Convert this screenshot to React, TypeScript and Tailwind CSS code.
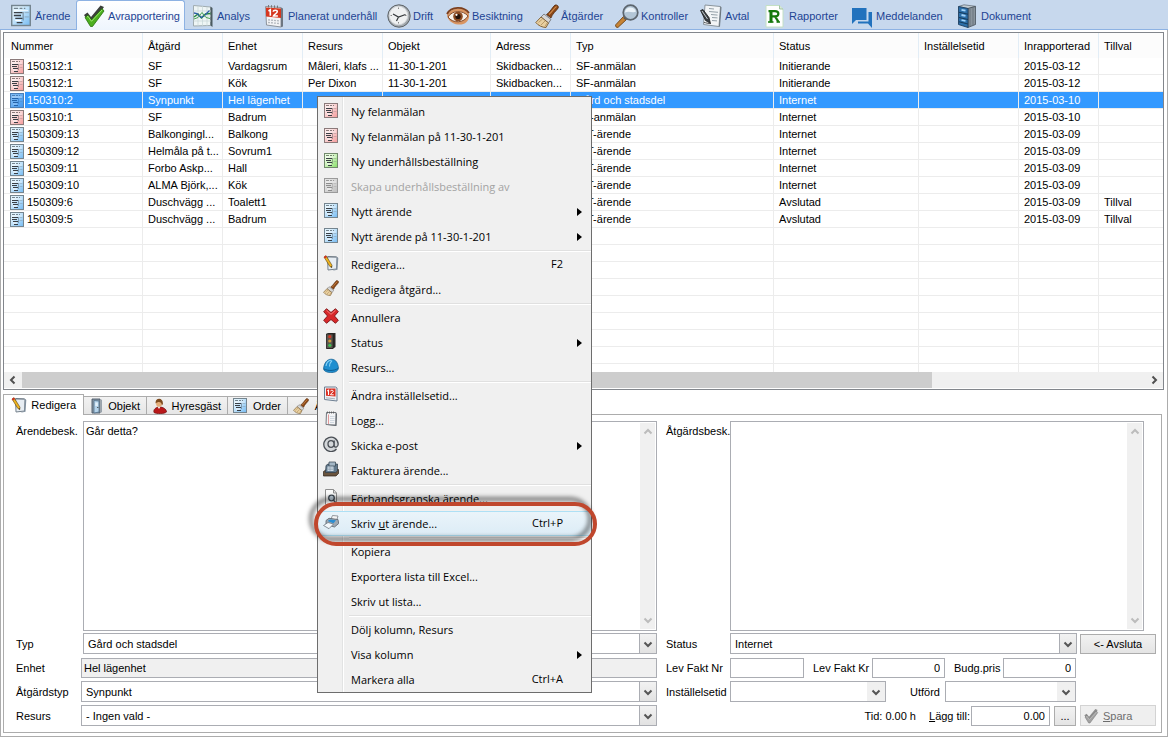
import { Fragment, useId, type ReactNode } from "react";

type IconProps = { className?: string };

const paperTones = {
  red: { light: "#fbe6e6", dark: "#f49a9a", edge: "#8b7a7a" },
  blue: { light: "#dff2fd", dark: "#74baf2", edge: "#75858f" },
  green: { light: "#e8fade", dark: "#86de66", edge: "#728a6c" },
  gray: { light: "#e2e2e2", dark: "#bdbdbd", edge: "#9a9a9a" },
  picked: { light: "#78b8f4", dark: "#3d94ec", edge: "#4a7fb6" },
};

type Tone = keyof typeof paperTones;

function FormIcon({ tone, className }: { tone: Tone; className?: string }) {
  const id = useId();
  const t = paperTones[tone];
  const ink = tone === "gray" ? "#8d8d8d" : tone === "picked" ? "#2463a8" : "#3a3f45";
  return (
    <svg viewBox="0 0 14 15" className={className} aria-hidden="true">
      <defs>
        <linearGradient id={id} x1="0" y1="0" x2="1" y2="1">
          <stop offset="0.25" stopColor={t.light} />
          <stop offset="1" stopColor={t.dark} />
        </linearGradient>
      </defs>
      <rect x="0.5" y="0.5" width="13" height="14" fill={`url(#${id})`} stroke={t.edge} />
      <path d="M2 2.500h3M6 2.500h2M9 2.500h1" stroke={t.edge} strokeWidth="1" />
      <path d="M2 4h10" stroke="#fff" strokeWidth="0.8" opacity="0.7" />
      <path d="M2 5.500h6M2 7.500h5M3 9.500h5M4 12.500h4" stroke={ink} strokeWidth="1" />
      <path d="M3 10.500h4v1H3z" fill={tone === "picked" ? "#9ccbf8" : "#fff"} />
      <path d="M8.500 5v6" stroke={ink} strokeWidth="0.8" opacity="0.5" />
      <path d="M9.500 5.500h3M9.500 8.500h3" stroke={t.edge} strokeWidth="0.6" opacity="0.6" />
    </svg>
  );
}

function CheckMark({ gray, className }: { gray?: boolean; className?: string }) {
  return (
    <svg viewBox="0 0 24 24" className={className} aria-hidden="true">
      <path d="M2 11 5.500 8.500 9 13 18.500 1.500 22 3 10.500 19.500 8 20z" fill={gray ? "#8f8f8f" : "#3b3f3b"} />
      <path d="M3 13.500 6 11l3.500 5L20 4.500l2 2.500L10.500 22.500 8.500 22.500z" fill={gray ? "#a3a3a3" : "#4caf1f"} stroke={gray ? "#777" : "#26700c"} strokeWidth="0.8" />
      <path d="M5 13l1-.7 3.500 5L20 6" fill="none" stroke={gray ? "#c9c9c9" : "#9be86c"} strokeWidth="1" />
    </svg>
  );
}

function ChartIcon({ className }: IconProps) {
  return (
    <svg viewBox="0 0 24 24" className={className} aria-hidden="true">
      <path d="M2.500 1.500 19.500 3v18.500L2.500 22z" fill="#eef5f5" stroke="#a0acb0" />
      <path d="M19.500 2.500l2 1.500V23l-2-1.500z" fill="#4b5a60" />
      <path d="M7 2v20M11.500 2v20M16 3v19M2.500 7H20M2.500 12H20M2.500 17H20" stroke="#c6d6d7" strokeWidth="0.7" />
      <path d="M3 13l4-3 3.500 4 4-4 5-.5" fill="none" stroke="#268a3c" strokeWidth="1.400" />
      <path d="M3 9l3 .5 4 4 3-1.500 5.500-5.500" fill="none" stroke="#2d5da8" strokeWidth="1.300" />
      <path d="M3 15l4-1.500 4-5 4 5 4 1" fill="none" stroke="#47a352" strokeWidth="1" />
    </svg>
  );
}

function CalendarIcon({ className }: IconProps) {
  return (
    <svg viewBox="0 0 24 24" className={className} aria-hidden="true">
      <path d="M3.500 2.500 19 3.500v19.500L4.500 21z" fill="#f2f3f5" stroke="#8c939c" />
      <path d="M19 3.500l2 1v18l-2 .8z" fill="#6d7680" />
      <path d="M4 3.500l15 1v9.500L4 12.500z" fill="#d6361f" />
      <path d="M6.500 1v2.500M9.500 1.200v2.500M12.500 1.400v2.500M15.500 1.600v2.500" stroke="#777" strokeWidth="1" />
      <path d="M6.500 7l1.800-1.200v6" fill="none" stroke="#fff" strokeWidth="1.600" />
      <path d="M11.300 7.800c0-2.200 4-2.200 4 0 0 1.600-3.600 2.300-4 4.300h4.600" fill="none" stroke="#fff" strokeWidth="1.500" />
      <path d="M6 15.800l11 1M6 18.500l11 1" stroke="#b3b8be" strokeWidth="1.300" strokeDasharray="2 1" />
    </svg>
  );
}

function ClockIcon({ className }: IconProps) {
  return (
    <svg viewBox="0 0 24 24" className={className} aria-hidden="true">
      <circle cx="12" cy="12" r="11.200" fill="#a3a9ae" stroke="#5e6468" />
      <circle cx="11.500" cy="11.500" r="9.300" fill="#eff1f2" stroke="#d3d7da" />
      <path d="M11.500 3.500v1.500M11.500 18v1.500M3.500 11.500H5M18 11.500h1.500" stroke="#888" />
      <path d="M6 10l5.500 3 7-2.500M11.500 13l-2 4" fill="none" stroke="#34383b" strokeWidth="1.200" />
    </svg>
  );
}

function EyeIcon({ className }: IconProps) {
  return (
    <svg viewBox="0 0 24 24" className={className} aria-hidden="true">
      <path d="M1 11C5 3 18 2 23 10c1 8-5 11-11 10.500S1.500 16 1 11z" fill="#d99562" />
      <path d="M1 10C5 2 18 2 23 9" fill="none" stroke="#7b3f1e" strokeWidth="1.800" />
      <path d="M2 13c4-7 15-7 20-1-4 7-15 8-20 1z" fill="#f7f1ea" stroke="#7b3f1e" strokeWidth="0.900" />
      <circle cx="12" cy="12.500" r="4.800" fill="#8a4a22" />
      <circle cx="12" cy="12.500" r="2.600" fill="#24120a" />
      <circle cx="10.500" cy="10.800" r="1.100" fill="#fff" />
    </svg>
  );
}

function BrushIcon({ className }: IconProps) {
  return (
    <svg viewBox="0 0 24 24" className={className} aria-hidden="true">
      <path d="M11.500 10.500c3-1.500 6-7.500 8.500-9.500 2-.5 3.800 1 3.300 2.800-1.800 3-6.300 6.200-7.300 10.200z" fill="#8a4716" stroke="#54280a" strokeWidth="0.800" />
      <path d="M14 10.500c3-2.500 5-6.500 7.500-8" fill="none" stroke="#cf8a4a" strokeWidth="1.200" />
      <path d="M9 10l7 5.500-2.500 3.500-7.500-6z" fill="#d6d6d6" stroke="#6d6d6d" strokeWidth="0.800" />
      <path d="M6 13l7.500 6-2.500 4.500C7.500 23.500 3 21.500.8 18.500z" fill="#e8cf9f" stroke="#7a5a2e" strokeWidth="0.900" />
      <path d="M7.500 15l-4 3.500M10 17l-4 4M12 19l-2 3.500" stroke="#a88552" strokeWidth="0.700" />
    </svg>
  );
}

function LensIcon({ className }: IconProps) {
  return (
    <svg viewBox="0 0 24 24" className={className} aria-hidden="true">
      <path d="M8.500 12.500l3 3-8.300 7.700c-1.500 1-3.400-1-2.400-2.500z" fill="#c78435" stroke="#6f4212" strokeWidth="0.900" />
      <path d="M9.300 15l2-2" stroke="#555" strokeWidth="3" />
      <circle cx="15.500" cy="8.500" r="7.300" fill="#b3c6d6" stroke="#5d666e" strokeWidth="1.700" />
      <path d="M10 8.500c0-6 9-7 11-1-3 2-7-1-11 1z" fill="#eaf2f8" />
    </svg>
  );
}

function ContractIcon({ className }: IconProps) {
  return (
    <svg viewBox="0 0 24 24" className={className} aria-hidden="true">
      <path d="M6 1l15.500 1.500-1.500 20-15.500-2z" fill="#f3f5f7" stroke="#8a949c" />
      <path d="M21.500 2.500l1 .8-1.500 19.200-1 .3z" fill="#6b757d" />
      <path d="M10 4.500l5 .5M10 7.500l9 .8M12 10.500l6.500.6M13 13.500l5.500.4M13 16.500l5 .4" stroke="#94a0a8" strokeWidth="1" />
      <path d="M1.500 6.500 4 5.500l6 8 1.500 6-5-3z" fill="#3a3f44" stroke="#111" strokeWidth="0.700" />
      <path d="M3 7l5.500 8" stroke="#c6ccd0" strokeWidth="1" />
      <path d="M5 18.500c2 0 4 1.500 7 1" fill="none" stroke="#444" strokeWidth="0.900" />
    </svg>
  );
}

function ReportIcon({ className }: IconProps) {
  return (
    <svg viewBox="0 0 24 24" className={className} aria-hidden="true">
      <path d="M3 1.500h13.500L20 5v18H3z" fill="#fff" stroke="#c4e0c4" />
      <path d="M16.500 1.500V5H20" fill="#d9ead9" stroke="#8fb98f" strokeWidth="0.800" />
      <g fill="none" stroke="#16780c">
        <path d="M8 6.500v12" strokeWidth="3" />
        <path d="M5.500 7.200H12c4.500 0 4.500 5.200 0 5.200H8M12 12.400l3.500 5.400" strokeWidth="2.200" />
        <path d="M5 18h5.500M13.500 18H17" strokeWidth="1.500" />
      </g>
    </svg>
  );
}

function ChatIcon({ className }: IconProps) {
  return (
    <svg viewBox="0 0 24 24" className={className} aria-hidden="true">
      <path d="M2 4h14.500v12H6l-4 4z" fill="#2272bd" />
      <path d="M18.500 8H22v16l-4-4.500H8V17.500h10.500z" fill="#2272bd" />
    </svg>
  );
}

function CabinetIcon({ className }: IconProps) {
  return (
    <svg viewBox="0 0 24 24" className={className} aria-hidden="true">
      <path d="M3.500 2.500 9 .8l11.500 1.500L13 4.500z" fill="#c3ccd3" stroke="#59646e" strokeWidth="0.700" />
      <path d="M13 4.500l7.500-2v18L13 23.500z" fill="#8a949d" stroke="#3a434c" strokeWidth="0.700" />
      <path d="M15 5v17M18 4v17" stroke="#626d77" strokeWidth="0.800" />
      <path d="M3.500 2.500 13 4.500v19L3.500 20.500z" fill="#2c6ea8" stroke="#1e3f61" strokeWidth="0.900" />
      <path d="M4 8.300 13 10.200M4 13.500l9 2M4 17.800l9 2.200" stroke="#163a5a" strokeWidth="1" />
      <path d="M6.500 5.800l4 .8M6.500 11l4 .8M6.500 16l4 1" stroke="#a4d4fa" strokeWidth="1.800" />
    </svg>
  );
}

function NotepadPencil({ className }: IconProps) {
  return (
    <svg viewBox="0 0 16 16" className={className} aria-hidden="true">
      <path d="M4.500 1.500l9.500.5-.5 12-8.500 1z" fill="#e7edf3" stroke="#75818c" />
      <path d="M14 2l1.300 1-.8 11.800-5 1 4-2z" fill="#8291a0" />
      <path d="M6 1v2M8 1v2M10 1v2M12 1v2" stroke="#5d6872" strokeWidth="0.700" />
      <path d="M1 2l2-1.300 6 9.500-.3 2.500-2-1.400z" fill="#f0b41e" stroke="#5b430e" strokeWidth="0.600" />
      <path d="M.8 2 3 .6l1 1.500-2.200 1.400z" fill="#d22e20" />
      <path d="M7.600 11.600l1.300 1.200-.1-1.500z" fill="#222" />
    </svg>
  );
}

function CrossIcon({ className }: IconProps) {
  return (
    <svg viewBox="0 0 16 16" className={className} aria-hidden="true">
      <path d="M3.500.7 8 4.500 12.500.7l2.800 3L11.500 8l3.800 4.300-2.800 3L8 11.500l-4.500 3.800-2.800-3L4.500 8 .7 3.700z" fill="#d8282a" stroke="#7c0f12" strokeWidth="0.900" />
      <path d="M3.500 2.300 8 6.300l4.500-4" fill="none" stroke="#f48a86" strokeWidth="0.900" />
    </svg>
  );
}

function TrafficLight({ className }: IconProps) {
  return (
    <svg viewBox="0 0 16 16" className={className} aria-hidden="true">
      <path d="M3.500.8 5.500 0h7v14l-3 2h-6z" fill="#2b2927" />
      <path d="M3.500 1h6.500v14.500H3.500z" fill="#5b574f" stroke="#1f1d1b" strokeWidth="0.700" />
      <circle cx="6.800" cy="3.700" r="1.600" fill="#d33824" />
      <circle cx="6.800" cy="8" r="1.600" fill="#cf9a3c" />
      <circle cx="6.800" cy="12.300" r="1.600" fill="#3fbe54" />
    </svg>
  );
}

function HelmetIcon({ className }: IconProps) {
  return (
    <svg viewBox="0 0 16 16" className={className} aria-hidden="true">
      <path d="M.5 11C1 5 4 1 8.500 1.200c4.500.2 6.500 4 7 9-.8 3.500-4 4.500-8 4.300-4 0-6.500-1.500-7-3.500z" fill="#1f8fd0" stroke="#0e5a8c" strokeWidth="0.700" />
      <path d="M3 8c.5-3 2.500-5.500 5-5.700M6.500 8.500c0-2.500 1-4.500 2.500-6" fill="none" stroke="#8bd2f6" strokeWidth="1.100" />
      <path d="M1 11c4 2 10 2 14-.5" fill="none" stroke="#0d5688" strokeWidth="0.900" />
    </svg>
  );
}

function DateIcon({ className }: IconProps) {
  return (
    <svg viewBox="0 0 16 16" className={className} aria-hidden="true">
      <path d="M1.500 1h11l1.500 1v13L1.500 13.500z" fill="#eef0f3" stroke="#6d7f92" />
      <path d="M3 2.500h9.500v8L3 9.800z" fill="#da2f22" />
      <path d="M4.300 5l1.200-.8v4.800" fill="none" stroke="#fff" strokeWidth="1.100" />
      <path d="M7.500 5.300c0-1.500 2.800-1.500 2.800 0 0 1.200-2.500 1.700-2.800 3.500h3.200" fill="none" stroke="#fff" strokeWidth="1" />
      <path d="M3 11.800l9 1" stroke="#aab3bd" />
    </svg>
  );
}

function LogIcon({ className }: IconProps) {
  return (
    <svg viewBox="0 0 16 16" className={className} aria-hidden="true">
      <path d="M3.500 1.500h9.500l-.3 12.500-9.700-.5z" fill="#f3f4f6" stroke="#74797f" />
      <path d="M13 2l1 .8-.5 12.200-9-.5 8.200-.5z" fill="#5f666d" />
      <path d="M4.500.5v2M6.500.5v2M8.500.5v2M10.500.5v2" stroke="#555" strokeWidth="0.800" />
      <path d="M5.500 3.500v9.500" stroke="#e08f8f" strokeWidth="0.900" />
      <path d="M7 5.500h4.500M7 7.500h4.500M7 9.500h4.500M7 11.500h4" stroke="#c7d0da" strokeWidth="0.800" />
    </svg>
  );
}

function AtIcon({ className }: IconProps) {
  return (
    <svg viewBox="0 0 16 16" className={className} aria-hidden="true">
      <circle cx="8" cy="8" r="7.300" fill="#d4d7da" />
      <path d="M13.500 13A7.200 7.200 0 1 1 15.200 8c0 3.500-3.900 4.200-4 1.500V4.500M11 8a3 3.300 0 1 1-6 0 3 3.300 0 0 1 6 0z" fill="none" stroke="#4a4f55" strokeWidth="1.300" />
    </svg>
  );
}

function RegisterIcon({ className }: IconProps) {
  return (
    <svg viewBox="0 0 16 16" className={className} aria-hidden="true">
      <path d="M.5 10.500l3-2H15.500v4L13 15H.5z" fill="#6a543d" stroke="#2b2119" strokeWidth="0.700" />
      <path d="M3 4.500 5 3h9.500v7l-2 1.500H2.500z" fill="#62798c" stroke="#2c3b48" strokeWidth="0.700" />
      <path d="M6 1h6.500v4H6z" fill="#a3b6c5" stroke="#34434f" strokeWidth="0.700" />
      <path d="M4.500 5.500h6V10h-6z" fill="#d3e0ea" />
      <path d="M5 7h5M5 8.600h5M7 5.500V10" stroke="#8496a4" strokeWidth="0.600" />
    </svg>
  );
}

function PreviewIcon({ className }: IconProps) {
  return (
    <svg viewBox="0 0 16 16" className={className} aria-hidden="true">
      <path d="M2.500.5h8L13.500 4v11.500h-11z" fill="#fafafa" stroke="#8e8e8e" />
      <path d="M10.500.5V4h3" fill="none" stroke="#8e8e8e" />
      <circle cx="8.500" cy="9" r="2.800" fill="#cfe0ee" stroke="#444e58" strokeWidth="1.300" />
      <path d="M10.500 11.200l2.500 2.800" stroke="#444e58" strokeWidth="1.500" />
    </svg>
  );
}

function PrinterIcon({ className }: IconProps) {
  return (
    <svg viewBox="0 0 16 16" className={className} aria-hidden="true">
      <path d="M8 5 9.500 1.500 15 2l-1.200 4z" fill="#f4f4f4" stroke="#7c8288" strokeWidth="0.800" />
      <path d="M3 6.500 6 4.300l9 1.200.7 4L11.500 13 3 10.500z" fill="#9ea9b3" stroke="#59636d" strokeWidth="0.800" />
      <path d="M4.500 7l2.500-1.600 6 .9-2.500 2.900z" fill="#2b8ed2" />
      <path d="M.5 11.500 5 8.500l5.500 1.500-4.500 4.700z" fill="#f2f7fb" stroke="#6f7a84" strokeWidth="0.800" />
    </svg>
  );
}

function DoorIcon({ className }: IconProps) {
  return (
    <svg viewBox="0 0 16 16" className={className} aria-hidden="true">
      <path d="M3 1h8v14H3z" fill="#8696a5" stroke="#4b5866" strokeWidth="0.900" />
      <path d="M5 2.500l5 .5v11L5 15z" fill="#b5d3ea" stroke="#56748e" strokeWidth="0.800" />
      <path d="M6.300 4.500h2.500v3.500H6.300z" fill="#e2f0fa" />
      <circle cx="8.800" cy="9.500" r="0.600" fill="#222" />
      <path d="M11.500 1l1.500 1v12l-1.500 1z" fill="#99a3ac" />
    </svg>
  );
}

function PersonIcon({ className }: IconProps) {
  return (
    <svg viewBox="0 0 16 16" className={className} aria-hidden="true">
      <path d="M2 14.500c-1-3 2-5.500 5.500-5.500s7 2 7 5c-2 2-10 2.200-12.500.5z" fill="#b9181a" stroke="#6e0c0c" strokeWidth="0.700" />
      <ellipse cx="7" cy="5" rx="3" ry="3.900" fill="#e4ae7a" />
      <path d="M3.600 5.500c-.8-6.500 8-6.500 7.300.5l-1 1.500C10 3.500 6 3 3.600 5.500z" fill="#7c4a1d" />
      <path d="M5.500 8.700 7 11l1.500-2.300z" fill="#f1f1f1" />
    </svg>
  );
}

function Chevron({ dir, className }: { dir: "up" | "down" | "left" | "right"; className?: string }) {
  const paths = {
    up: "M1.500 6.500 5 3l3.500 3.500",
    down: "M1.500 3.500 5 7l3.500-3.500",
    left: "M6.500 1.500 3 5l3.500 3.500",
    right: "M3.500 1.500 7 5 3.500 8.500",
  };
  return (
    <svg viewBox="0 0 10 10" className={className} aria-hidden="true">
      <path d={paths[dir]} fill="none" stroke="currentColor" strokeWidth="2" />
    </svg>
  );
}

const modules: { label: string; width: string; icon: ReactNode; active?: boolean }[] = [
  { label: "Ärende", width: "w-[73px]", icon: <FormIcon tone="blue" className="h-[23px] w-5" /> },
  { label: "Avrapportering", width: "w-[109px]", icon: <CheckMark className="size-6" />, active: true },
  { label: "Analys", width: "w-[71px]", icon: <ChartIcon className="size-6" /> },
  { label: "Planerat underhåll", width: "w-[125px]", icon: <CalendarIcon className="size-6" /> },
  { label: "Drift", width: "w-[59px]", icon: <ClockIcon className="size-6" /> },
  { label: "Besiktning", width: "w-[89px]", icon: <EyeIcon className="size-6" /> },
  { label: "Åtgärder", width: "w-[80px]", icon: <BrushIcon className="size-6" /> },
  { label: "Kontroller", width: "w-[84px]", icon: <LensIcon className="size-6" /> },
  { label: "Avtal", width: "w-[64px]", icon: <ContractIcon className="size-6" /> },
  { label: "Rapporter", width: "w-[87px]", icon: <ReportIcon className="size-6" /> },
  { label: "Meddelanden", width: "w-[105px]", icon: <ChatIcon className="size-6" /> },
  { label: "Dokument", width: "w-[90px]", icon: <CabinetIcon className="size-6" /> },
];

const columns = [
  { label: "Nummer", width: "w-[139px]" },
  { label: "Åtgärd", width: "w-20" },
  { label: "Enhet", width: "w-20" },
  { label: "Resurs", width: "w-20" },
  { label: "Objekt", width: "w-[108px]" },
  { label: "Adress", width: "w-20" },
  { label: "Typ", width: "w-[203px]" },
  { label: "Status", width: "w-[145px]" },
  { label: "Inställelsetid", width: "w-[100px]" },
  { label: "Inrapporterad", width: "w-20" },
  { label: "Tillval", width: "" },
];

const rows: { tone: Tone; cells: string[] }[] = [
  { tone: "red", cells: ["150312:1", "SF", "Vardagsrum", "Måleri, klafs ...", "11-30-1-201", "Skidbacken...", "SF-anmälan", "Initierande", "", "2015-03-12", ""] },
  { tone: "red", cells: ["150312:1", "SF", "Kök", "Per Dixon", "11-30-1-201", "Skidbacken...", "SF-anmälan", "Initierande", "", "2015-03-12", ""] },
  { tone: "picked", cells: ["150310:2", "Synpunkt", "Hel lägenhet", "", "", "", "Gård och stadsdel", "Internet", "", "2015-03-10", ""] },
  { tone: "red", cells: ["150310:1", "SF", "Badrum", "", "", "", "SF-anmälan", "Internet", "", "2015-03-10", ""] },
  { tone: "blue", cells: ["150309:13", "Balkongingl...", "Balkong", "", "", "", "INT-ärende", "Internet", "", "2015-03-09", ""] },
  { tone: "blue", cells: ["150309:12", "Helmåla på t...", "Sovrum1", "", "", "", "INT-ärende", "Internet", "", "2015-03-09", ""] },
  { tone: "blue", cells: ["150309:11", "Forbo Askp...", "Hall", "", "", "", "INT-ärende", "Internet", "", "2015-03-09", ""] },
  { tone: "blue", cells: ["150309:10", "ALMA Björk,...", "Kök", "", "", "", "INT-ärende", "Internet", "", "2015-03-09", ""] },
  { tone: "blue", cells: ["150309:6", "Duschvägg ...", "Toalett1", "", "", "", "INT-ärende", "Avslutad", "", "2015-03-09", "Tillval"] },
  { tone: "blue", cells: ["150309:5", "Duschvägg ...", "Badrum", "", "", "", "INT-ärende", "Avslutad", "", "2015-03-09", "Tillval"] },
];

type MenuEntry = {
  label: ReactNode;
  icon?: ReactNode;
  shortcut?: string;
  submenu?: boolean;
  disabled?: boolean;
  hot?: boolean;
};

const doc = "h-[15px] w-[14px]";
const pic = "size-4";

const menuGroups: MenuEntry[][] = [
  [
    { label: "Ny felanmälan", icon: <FormIcon tone="red" className={doc} /> },
    { label: "Ny felanmälan på 11-30-1-201", icon: <FormIcon tone="red" className={doc} /> },
    { label: "Ny underhållsbeställning", icon: <FormIcon tone="green" className={doc} /> },
    { label: "Skapa underhållsbeställning av", icon: <FormIcon tone="gray" className={doc} />, disabled: true },
    { label: "Nytt ärende", icon: <FormIcon tone="blue" className={doc} />, submenu: true },
    { label: "Nytt ärende på 11-30-1-201", icon: <FormIcon tone="blue" className={doc} />, submenu: true },
  ],
  [
    { label: "Redigera...", icon: <NotepadPencil className={pic} />, shortcut: "F2" },
    { label: "Redigera åtgärd...", icon: <BrushIcon className={pic} /> },
  ],
  [
    { label: "Annullera", icon: <CrossIcon className={pic} /> },
    { label: "Status", icon: <TrafficLight className={pic} />, submenu: true },
    { label: "Resurs...", icon: <HelmetIcon className={pic} /> },
  ],
  [
    { label: "Ändra inställelsetid...", icon: <DateIcon className={pic} /> },
    { label: "Logg...", icon: <LogIcon className={pic} /> },
    { label: "Skicka e-post", icon: <AtIcon className={pic} />, submenu: true },
    { label: "Fakturera ärende...", icon: <RegisterIcon className={pic} /> },
  ],
  [
    { label: "Förhandsgranska ärende...", icon: <PreviewIcon className={pic} /> },
    { label: <>Skriv <u>u</u>t ärende...</>, icon: <PrinterIcon className={pic} />, shortcut: "Ctrl+P", hot: true },
  ],
  [{ label: "Kopiera" }, { label: "Exportera lista till Excel..." }, { label: "Skriv ut lista..." }],
  [{ label: "Dölj kolumn, Resurs" }, { label: "Visa kolumn", submenu: true }, { label: "Markera alla", shortcut: "Ctrl+A" }],
];

function ModuleBar() {
  return (
    <nav className="flex h-[30px] items-end border-b border-[#8db2e3] bg-[#c7d8ed] pl-[3px]">
      {modules.map((m) => (
        <button
          key={m.label}
          type="button"
          className={`flex shrink-0 items-center gap-0.5 pl-[5px] whitespace-nowrap text-[#1e4494] ${m.width} ${
            m.active
              ? "-mb-px h-[30px] rounded-t-[3px] border border-b-0 border-[#8db2e3] bg-linear-to-b from-white to-[#eef5fd]"
              : "h-[29px] border-l border-transparent pt-0.5"
          }`}
        >
          <span className="flex w-6 justify-center">{m.icon}</span>
          {m.label}
        </button>
      ))}
    </nav>
  );
}

function CaseTable() {
  return (
    <section className="border border-[#82868c]">
      <table className="w-full table-fixed border-separate border-spacing-0 text-left">
        <thead>
          <tr className="h-[25px]">
            {columns.map((c, i) => (
              <th
                key={c.label}
                className={`border-r border-[#e2edf6] bg-[#fcfcfc] py-0 pr-0 font-normal whitespace-nowrap last:border-r-0 ${i === 0 ? "pl-[7px]" : "pl-[5px]"} ${c.width}`}
              >
                {c.label}
              </th>
            ))}
          </tr>
        </thead>
        <tbody>
          {rows.map((row, r) => {
            const picked = row.tone === "picked";
            return (
              <tr key={r} className={`h-[17px] leading-[15px] ${picked ? "text-white" : ""}`}>
                {row.cells.map((cell, i) =>
                  i === 0 ? (
                    <td key={i} className="border-r border-b border-[#ececec] p-0">
                      <div className="flex h-4 items-center gap-px pl-[6px]">
                        <FormIcon tone={row.tone} className="h-[15px] w-[14px] shrink-0" />
                        <span className={`flex-1 pt-px pl-0.5 ${picked ? "bg-[#3399ff]" : ""}`}>{cell}</span>
                      </div>
                    </td>
                  ) : (
                    <td
                      key={i}
                      className={`overflow-hidden border-r border-b border-[#ececec] pt-px pr-0 pb-0 pl-[5px] whitespace-nowrap last:border-r-0 ${picked ? "bg-[#3399ff] bg-clip-padding" : ""}`}
                    >
                      {cell}
                    </td>
                  ),
                )}
              </tr>
            );
          })}
          {Array.from({ length: 9 }, (_, r) => (
            <tr key={r} aria-hidden="true" className={r < 8 ? "h-[17px]" : "h-2"}>
              {columns.map((c) => (
                <td key={c.label} className={`border-r border-[#ececec] p-0 last:border-r-0 ${r < 8 ? "border-b" : ""}`} />
              ))}
            </tr>
          ))}
        </tbody>
      </table>
      <div className="mb-px flex h-4 items-center bg-[#f0f0f0] text-[#505050]">
        <button type="button" aria-label="Rulla vänster" className="flex w-[18px] shrink-0 justify-center">
          <Chevron dir="left" className="size-[10px]" />
        </button>
        <div className="flex flex-1">
          <div className="h-4 w-[81%] bg-[#cdcdcd]" />
        </div>
        <button type="button" aria-label="Rulla höger" className="flex w-[18px] shrink-0 justify-center">
          <Chevron dir="right" className="size-[10px]" />
        </button>
      </div>
    </section>
  );
}

const detailTabs = [
  { label: "Objekt", width: "w-[63px]", icon: <DoorIcon className="size-4" /> },
  { label: "Hyresgäst", width: "w-[81px]", icon: <PersonIcon className="size-4" /> },
  { label: "Order", width: "w-[60px]", icon: <FormIcon tone="blue" className="h-[15px] w-[14px]" /> },
  { label: "Åtgärder", width: "w-[76px]", icon: <BrushIcon className="size-4" /> },
];

function DetailTabs() {
  return (
    <div className="flex h-5 items-end whitespace-nowrap">
      <button type="button" className="relative -mb-px flex h-[21px] w-[81px] items-center justify-between border border-b-0 border-[#acacac] bg-white px-[7px]">
        <NotepadPencil className="size-4" />
        Redigera
      </button>
      {detailTabs.map((t) => (
        <button
          key={t.label}
          type="button"
          className={`flex h-[18px] items-center justify-between border-t border-r border-[#acacac] bg-linear-to-b from-[#f2f2f2] to-[#e6e6e6] pr-[6px] pl-[5px] ${t.width}`}
        >
          {t.icon}
          {t.label}
        </button>
      ))}
    </div>
  );
}

function Memo({ id, value }: { id: string; value: string }) {
  return (
    <div className="flex h-[210px] flex-1 border border-[#abadb3]">
      <textarea id={id} defaultValue={value} className="flex-1 resize-none overflow-hidden px-0.5 py-px leading-4 outline-none" />
      <div className="my-px mr-px flex w-[15px] flex-col items-center justify-between bg-[#f0f0f0] py-1 text-[#bcbcbc]">
        <Chevron dir="up" className="size-[10px]" />
        <Chevron dir="down" className="size-[10px]" />
      </div>
    </div>
  );
}

function Combo({ id, value, flat, className }: { id: string; value: string; flat?: boolean; className?: string }) {
  return (
    <div className={`relative h-[21px] ${className ?? ""}`}>
      <select id={id} className="h-full w-full appearance-none border border-[#abadb3] bg-white pr-5 pl-1 leading-4 outline-none">
        <option>{value}</option>
      </select>
      <span
        className={`pointer-events-none absolute inset-y-0 right-0 flex w-[18px] items-center justify-center text-[#555] ${
          flat ? "my-px mr-px bg-[#f0f0f0]" : "border border-[#abadb3] bg-linear-to-b from-[#f2f2f2] to-[#e2e2e2]"
        }`}
      >
        <Chevron dir="down" className="size-[10px]" />
      </span>
    </div>
  );
}

const field = "h-5 border border-[#abadb3] px-1 text-right leading-4 outline-none";
const label = "w-[65px] shrink-0";
const line = "flex h-[21px] items-center";
const pushButton = "flex items-center justify-center border border-[#acacac] bg-linear-to-b from-[#f2f2f2] to-[#e4e4e4]";

function DetailPanel() {
  return (
    <section className="mr-0.5 flex gap-[9px] border border-[#acacac] pt-[6px] pr-[5px] pb-[6px] pl-3">
      <div className="flex flex-1 flex-col gap-[3px]">
        <div className="-mb-px flex">
          <label htmlFor="arendebesk" className="w-[67px] shrink-0 pt-0.5 leading-4">Ärendebesk.</label>
          <Memo id="arendebesk" value="Går detta?" />
        </div>
        <div className={line}>
          <label htmlFor="typ" className="w-[67px] shrink-0">Typ</label>
          <Combo id="typ" value="Gård och stadsdel" className="flex-1" />
        </div>
        <div className={line}>
          <label htmlFor="enhet" className={label}>Enhet</label>
          <input id="enhet" readOnly defaultValue="Hel lägenhet" className="h-5 flex-1 border border-[#abadb3] bg-[#f0f0f0] px-0.5 outline-none" />
        </div>
        <div className={line}>
          <label htmlFor="atgardstyp" className={label}>Åtgärdstyp</label>
          <Combo id="atgardstyp" value="Synpunkt" className="flex-1" />
        </div>
        <div className={line}>
          <label htmlFor="resurs" className={label}>Resurs</label>
          <Combo id="resurs" value="- Ingen vald -" className="flex-1" />
        </div>
      </div>

      <div className="flex w-[490px] shrink-0 flex-col gap-[3px]">
        <div className="-mb-px flex pr-3">
          <label htmlFor="atgardsbesk" className="w-16 shrink-0 pt-0.5 leading-4">Åtgärdsbesk.</label>
          <Memo id="atgardsbesk" value="" />
        </div>
        <div className={line}>
          <label htmlFor="status" className="w-16 shrink-0">Status</label>
          <Combo id="status" value="Internet" className="flex-1" />
          <button type="button" className={`ml-[3px] h-5 w-[76px] ${pushButton}`}>&lt;- Avsluta</button>
        </div>
        <div className={line}>
          <label htmlFor="levnr" className="w-16 shrink-0">Lev Fakt Nr</label>
          <input id="levnr" className={`w-[74px] ${field}`} />
          <label htmlFor="levkr" className="ml-[9px] w-[59px] shrink-0">Lev Fakt Kr</label>
          <input id="levkr" defaultValue="0" className={`w-[73px] ${field}`} />
          <label htmlFor="budget" className="ml-[9px] w-[49px] shrink-0">Budg.pris</label>
          <input id="budget" defaultValue="0" className={`w-[73px] ${field}`} />
        </div>
        <div className={line}>
          <label htmlFor="installelse" className="w-16 shrink-0">Inställelsetid</label>
          <Combo id="installelse" value="" flat className="w-[156px]" />
          <label htmlFor="utford" className="ml-6 w-[35px] shrink-0">Utförd</label>
          <Combo id="utford" value="" flat className="w-[131px]" />
        </div>
        <div className={`${line} justify-end whitespace-nowrap`}>
          <span>Tid: 0.00 h</span>
          <label htmlFor="laggtill" className="ml-[13px] w-[42px]"><u>L</u>ägg till:</label>
          <input id="laggtill" defaultValue="0.00" className={`w-[79px] ${field}`} />
          <button type="button" className={`ml-[4px] h-5 w-[22px] ${pushButton}`}>...</button>
          <button type="button" disabled className="ml-[4px] flex h-[21px] w-[76px] items-center gap-1 border border-[#d3d3d3] bg-[#efefef] pl-0.5 text-[#6d6d6d]">
            <CheckMark gray className="size-4" />
            <span><u>S</u>para</span>
          </button>
        </div>
      </div>
    </section>
  );
}

function ContextMenu() {
  return (
    <div
      role="menu"
      className="absolute top-[96px] left-[317px] w-[275px] border border-[#6d6d6d] bg-[#f0f0f0] pt-0.5 font-['Open_Sans','Noto_Sans',sans-serif] text-[11px]"
    >
      <div className="absolute inset-y-0 left-6 w-0.5 border-r border-l border-r-white border-l-[#e2e3e3]" />
      {menuGroups.map((group, g) => (
        <Fragment key={g}>
          {g > 0 && <div role="separator" className="relative mt-px ml-[31px] h-0.5 border-t border-b border-t-[#e0e0e0] border-b-white" />}
          {group.map((item, i) => (
            <button
              key={i}
              type="button"
              role="menuitem"
              disabled={item.disabled}
              className={`relative flex h-[25px] w-full items-center pl-[5px] text-left ${
                item.hot ? "border-y border-[#aee0f5] bg-linear-to-b from-[#eaf4fa] to-[#dcecf6]" : ""
              } ${item.disabled ? "text-[#a3a3a3]" : "text-black"}`}
            >
              <span className="mr-3 flex w-4 shrink-0 justify-center pb-[3px]">{item.icon}</span>
              <span className="flex-1">{item.label}</span>
              {item.shortcut && <span className="mr-7 pb-0.5">{item.shortcut}</span>}
              {item.submenu && (
                <svg viewBox="0 0 5 8" className="mr-[9px] h-2 w-[5px]" aria-hidden="true">
                  <path d="M0 0l5 4-5 4z" fill="#000" />
                </svg>
              )}
            </button>
          ))}
        </Fragment>
      ))}
      <div className="pointer-events-none absolute top-[405px] left-[-4px] h-11 w-[283px] rounded-[22px] border-4 border-[#c0472d] drop-shadow-[-5px_-5px_2px_rgba(0,0,0,0.5)]" />
    </div>
  );
}

export default function App() {
  return (
    <div className="relative bg-white font-['Liberation_Sans',Arial,sans-serif] text-[11px] leading-4 text-black">
      <ModuleBar />
      <main className="border-x border-b border-[#acacac] pt-0.5 pr-[3px] pb-[3px] pl-0.5">
        <CaseTable />
        <div className="pt-1">
          <DetailTabs />
          <DetailPanel />
        </div>
      </main>
      <ContextMenu />
    </div>
  );
}
